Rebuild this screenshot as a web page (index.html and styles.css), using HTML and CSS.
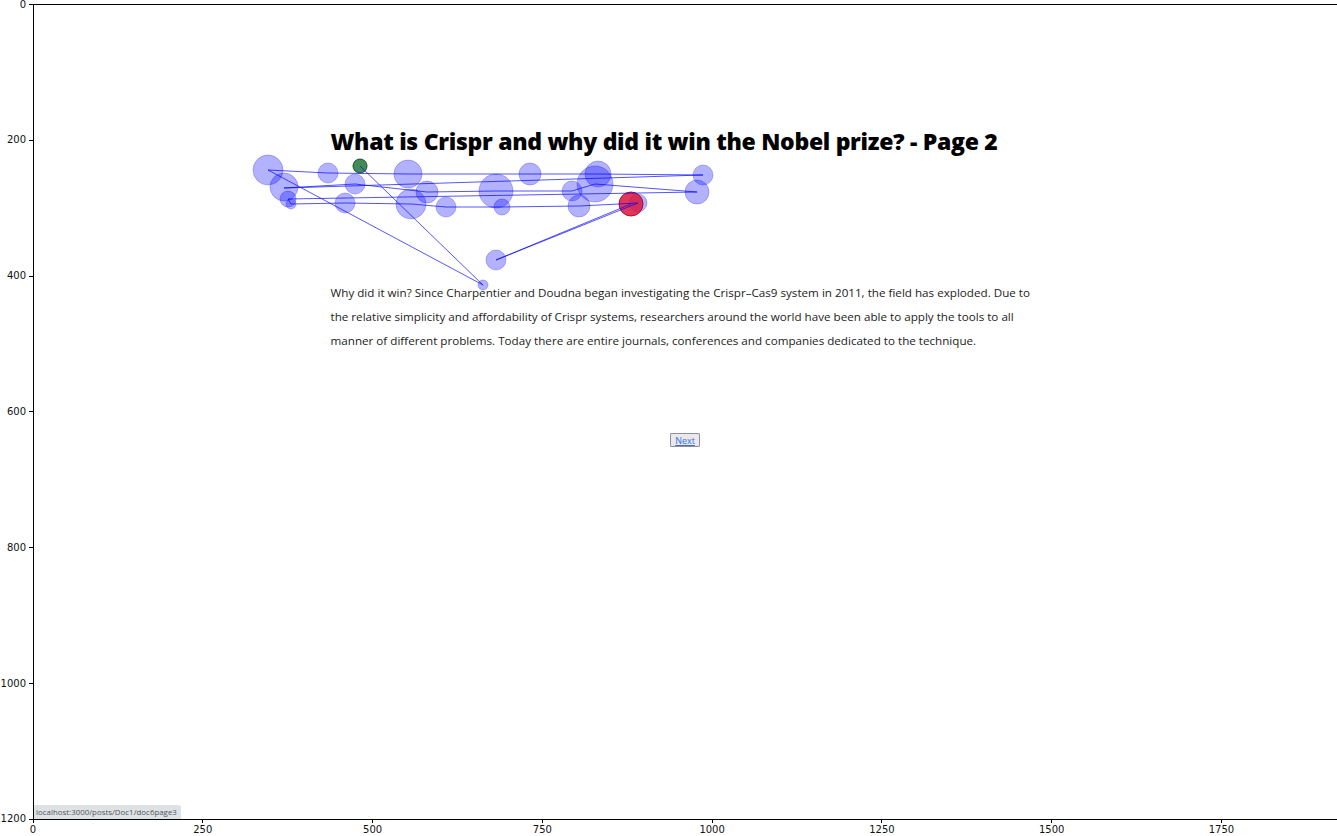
FILE: index.html
```html
<!DOCTYPE html>
<html>
<head>
<meta charset="utf-8">
<link rel="stylesheet" href="styles.css">
</head>
<body>
<div class="figure">
  <div class="yticks">
    <div class="ytick"><span class="tl">0</span><span class="tm"></span></div>
    <div class="ytick"><span class="tl">200</span><span class="tm"></span></div>
    <div class="ytick"><span class="tl">400</span><span class="tm"></span></div>
    <div class="ytick"><span class="tl">600</span><span class="tm"></span></div>
    <div class="ytick"><span class="tl">800</span><span class="tm"></span></div>
    <div class="ytick"><span class="tl">1000</span><span class="tm"></span></div>
    <div class="ytick"><span class="tl">1200</span><span class="tm"></span></div>
  </div>
  <div class="axes-cell">
    <div class="axes">
      <div class="page">
        <div class="column">
          <h1 class="title">What is Crispr and why did it win the Nobel prize? - Page 2</h1>
          <p class="body-text">Why did it win? Since Charpentier and Doudna began investigating the Crispr–Cas9 system in 2011, the field has exploded. Due to<br>the relative simplicity and affordability of Crispr systems, researchers around the world have been able to apply the tools to all<br>manner of different problems. Today there are entire journals, conferences and companies dedicated to the technique.</p>
        </div>
        <button class="next"><a href="#">Next</a></button>
      </div>
      <svg class="scanpath" width="1303" height="814" viewBox="0 0 1303 814">
        <g transform="translate(-34,-5)">
          <g class="fix">
            <circle cx="268" cy="170" r="15"/>
            <circle cx="284" cy="187" r="14"/>
            <circle cx="288" cy="199" r="8"/>
            <circle cx="291" cy="204" r="5"/>
            <circle cx="328" cy="173" r="10"/>
            <circle cx="355" cy="184" r="10"/>
            <circle cx="345" cy="203" r="10"/>
            <circle cx="408" cy="174" r="14"/>
            <circle cx="427" cy="192" r="11"/>
            <circle cx="411" cy="204" r="15"/>
            <circle cx="446" cy="207" r="10"/>
            <circle cx="496" cy="191" r="17"/>
            <circle cx="502" cy="207" r="8"/>
            <circle cx="496" cy="260" r="10"/>
            <circle cx="483" cy="285" r="5"/>
            <circle cx="530" cy="174" r="11"/>
            <circle cx="598" cy="174" r="13"/>
            <circle cx="595" cy="184" r="18"/>
            <circle cx="572" cy="191" r="10"/>
            <circle cx="579" cy="206" r="11"/>
            <circle cx="638" cy="203" r="9"/>
            <circle cx="703" cy="175" r="10"/>
            <circle cx="697" cy="192" r="12"/>
          </g>
          <circle class="start" cx="360" cy="166" r="7"/>
          <circle class="end" cx="631" cy="204" r="12"/>
          <polyline class="path" points="360,166 483,285 268,170 328,173 408,174 530,174 598,174 703,175 284,188 355,184 427,192 496,191 572,191 595,184 697,192 288,199 291,204 345,203 411,204 446,207 502,207 579,206 638,203 496,260 631,204"/>
        </g>
      </svg>
      <div class="status">localhost:3000/posts/Doc1/doc6page3</div>
    </div>
  </div>
  <div class="xticks">
    <div class="xtick"><span class="xm"></span><span class="xl">0</span></div>
    <div class="xtick"><span class="xm"></span><span class="xl">250</span></div>
    <div class="xtick"><span class="xm"></span><span class="xl">500</span></div>
    <div class="xtick"><span class="xm"></span><span class="xl">750</span></div>
    <div class="xtick"><span class="xm"></span><span class="xl">1000</span></div>
    <div class="xtick"><span class="xm"></span><span class="xl">1250</span></div>
    <div class="xtick"><span class="xm"></span><span class="xl">1500</span></div>
    <div class="xtick"><span class="xm"></span><span class="xl">1750</span></div>
  </div>
</div>
</body>
</html>
```
FILE: styles.css
```css
html, body {
  margin: 0;
  padding: 0;
  background: #fff;
}
body {
  width: 1337px;
  height: 836px;
  overflow: hidden;
}
.figure {
  display: grid;
  grid-template-columns: 33px 1304px;
  grid-template-rows: 820px 16px;
  width: 1337px;
  height: 836px;
  overflow: hidden;
  font-family: "DejaVu Sans", sans-serif;
  color: #000;
}
.yticks {
  display: flex;
  flex-direction: column;
  justify-content: space-between;
  height: 827px;
  margin-top: -1.5px;
}
.ytick {
  height: 12px;
  display: flex;
  align-items: center;
  justify-content: flex-end;
}
.tl {
  font-size: 10px;
  line-height: 12px;
  margin-right: 3px;
  color: #111;
}
.tm {
  width: 4px;
  height: 1px;
  background: #000;
}
.axes-cell {
  padding-top: 4px;
}
.axes {
  position: relative;
  box-sizing: border-box;
  height: 816px;
  width: 1305px;
  border: 1px solid #000;
  overflow: hidden;
}
.page {
  display: flex;
  flex-direction: column;
  align-items: center;
  padding-top: 124px;
  margin-left: -1px;
}
.column {
  width: 709px;
}
.title {
  margin: 0;
  font-family: "Open Sans", sans-serif;
  font-weight: 800;
  font-size: 23px;
  line-height: 24px;
  letter-spacing: -0.3px;
  color: #000;
  white-space: nowrap;
}
.body-text {
  margin: 127.5px 0 0;
  font-family: "Open Sans", sans-serif;
  font-size: 11.65px;
  line-height: 24.2px;
  color: #222;
  white-space: nowrap;
}
.next {
  margin-top: 80px;
  height: 14px;
  padding: 0 4px;
  border: 1px solid #8f8f9d;
  border-radius: 1px;
  background: #e9e9ed;
  font-family: "Open Sans", sans-serif;
  font-size: 9px;
  line-height: 11px;
}
.next a {
  color: #3b6fd8;
  text-decoration: underline;
}
.scanpath {
  position: absolute;
  left: 0;
  top: 0;
  overflow: visible;
}
.fix circle {
  fill: rgba(0, 0, 255, 0.3);
  stroke: rgba(0, 0, 255, 0.25);
  stroke-width: 1;
}
.start {
  fill: rgba(34, 120, 60, 0.85);
  stroke: #1d4d2c;
  stroke-width: 1;
}
.end {
  fill: rgba(220, 20, 60, 0.85);
  stroke: rgba(160, 10, 40, 0.9);
  stroke-width: 1;
}
.path {
  fill: none;
  stroke: rgba(0, 0, 255, 0.75);
  stroke-width: 0.9;
}
.status {
  position: absolute;
  left: 0;
  bottom: 0;
  height: 14px;
  width: 147px;
  box-sizing: border-box;
  padding: 0 2px;
  background: #dee1e6;
  border-top-right-radius: 3px;
  font-family: "Open Sans", sans-serif;
  font-size: 7.9px;
  line-height: 14px;
  color: #555;
  white-space: nowrap;
}
.xticks {
  grid-column: 1 / -1;
  display: flex;
  margin-left: -51.9px;
}
.xtick {
  flex: 0 0 169.79px;
  display: flex;
  flex-direction: column;
  align-items: center;
}
.xm {
  width: 1px;
  height: 4px;
  background: #000;
}
.xl {
  font-size: 10px;
  line-height: 12px;
  margin-top: 1px;
  color: #111;
}
```
